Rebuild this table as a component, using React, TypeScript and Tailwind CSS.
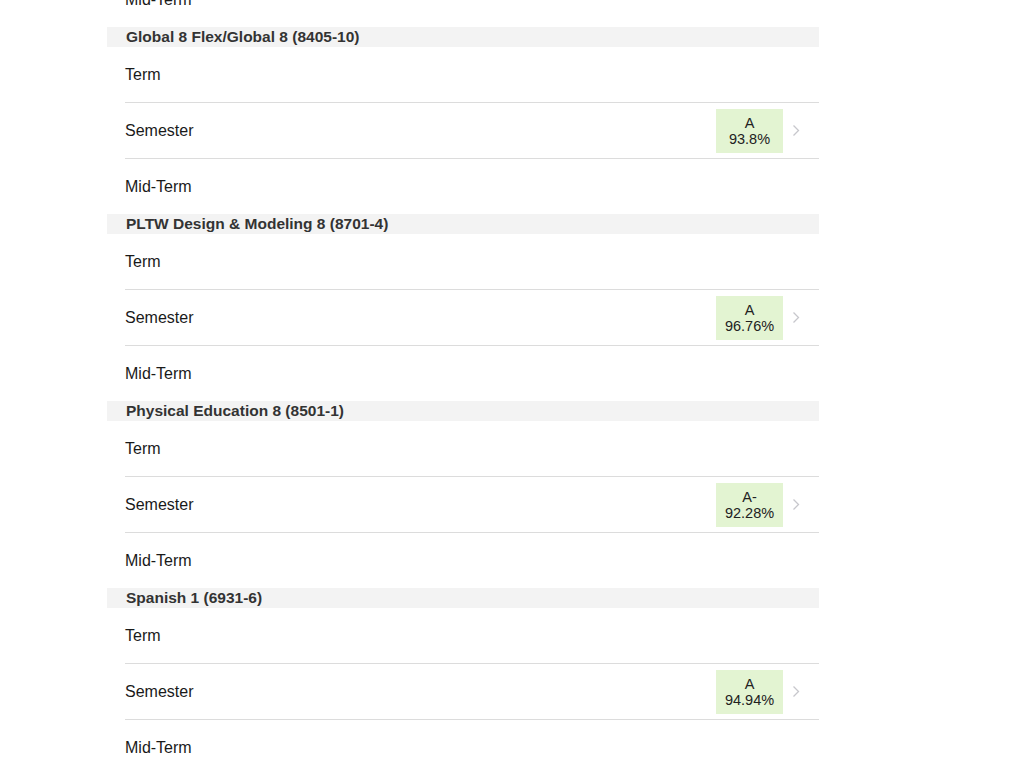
import React from "react";

type Course = { name: string; letter: string; pct: string };

const courses: Course[] = [
  { name: "Global 8 Flex/Global 8 (8405-10)", letter: "A", pct: "93.8%" },
  { name: "PLTW Design & Modeling 8 (8701-4)", letter: "A", pct: "96.76%" },
  { name: "Physical Education 8 (8501-1)", letter: "A-", pct: "92.28%" },
  { name: "Spanish 1 (6931-6)", letter: "A", pct: "94.94%" },
];

function Row({ label, children, sep }: { label: string; children?: React.ReactNode; sep?: boolean }) {
  return (
    <div className={sep ? "ml-[18px] h-[56px] border-b border-[#dcdcdc] flex items-center pr-[23px]" : "ml-[18px] h-[55px] flex items-center pr-[23px]"}>
      <span className="text-[16px] pt-[1px] text-[#1a1a1a] flex-1">{label}</span>
      {children}
    </div>
  );
}

function Chevron() {
  return (
    <svg width="8" height="13" viewBox="0 0 8 13" className="ml-[9px] mr-[-4px]">
      <path d="M1.5 1.5 L6.5 6.5 L1.5 11.5" fill="none" stroke="#c7c7cc" strokeWidth="1.3" />
    </svg>
  );
}

export default function App() {
  return (
    <div className="w-[1024px] h-[768px] overflow-hidden bg-white" style={{ fontFamily: '"Liberation Sans", Arial, sans-serif' }}>
      <div className="ml-[107px] w-[712px] -mt-[28px]">
        <Row label="Mid-Term" />
        {courses.map((c) => (
          <div key={c.name}>
            <div className="h-[20px] bg-[#f3f3f3] flex items-center pl-[19px] text-[15.5px] font-bold text-[#333]">
              {c.name}
            </div>
            <Row label="Term" sep />
            <Row label="Semester" sep>
              <div className="w-[67px] h-[44px] pt-[1px] bg-[#e3f4d2] flex flex-col items-center justify-center text-[14.5px] leading-[16px] text-[#222]">
                <span>{c.letter}</span>
                <span>{c.pct}</span>
              </div>
              <Chevron />
            </Row>
            <Row label="Mid-Term" />
          </div>
        ))}
      </div>
    </div>
  );
}
